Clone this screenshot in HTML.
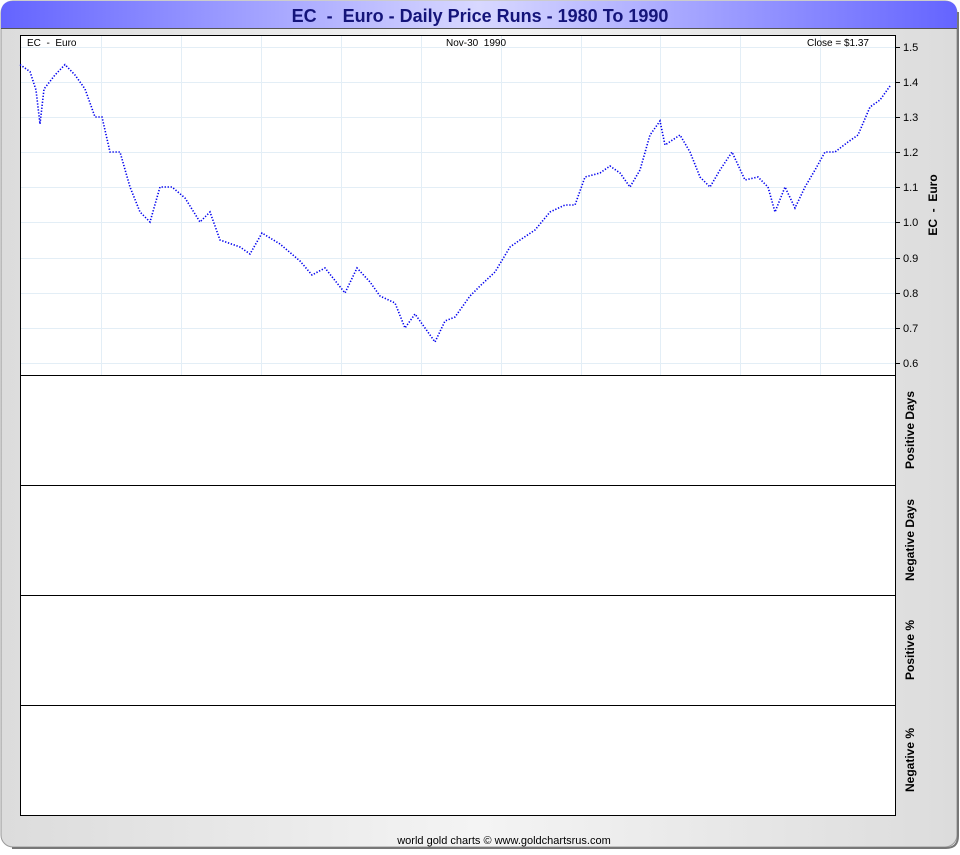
<!DOCTYPE html>
<html><head><meta charset="utf-8"><style>
html,body{margin:0;padding:0;background:#fff;}
body{width:960px;height:850px;overflow:hidden;font-family:"Liberation Sans",Arial,sans-serif;}
text{white-space:pre;}
</style></head><body>
<svg width="960" height="850" xmlns="http://www.w3.org/2000/svg" font-family="Liberation Sans, Arial, sans-serif" xml:space="preserve">
<defs>
<linearGradient id="tb" x1="0" x2="1" y1="0" y2="0">
<stop offset="0" stop-color="#6464ff"/><stop offset="0.5" stop-color="#d8d8ff"/><stop offset="1" stop-color="#6464ff"/></linearGradient>
<linearGradient id="bg" x1="0" x2="1" y1="0" y2="0">
<stop offset="0" stop-color="#dcdcdc"/><stop offset="0.5" stop-color="#f4f4f4"/><stop offset="1" stop-color="#dcdcdc"/></linearGradient>
</defs>
<rect x="1" y="1" width="956" height="846" rx="12" fill="url(#bg)" stroke="#999" stroke-width="1"/>
<path d="M958 12 V836 Q958 848 946 848 H12" fill="none" stroke="#777" stroke-width="2"/>
<path d="M1 28 V13 Q1 1 13 1 H945 Q957 1 957 13 V28 Z" fill="url(#tb)"/>
<line x1="1" y1="28.5" x2="957" y2="28.5" stroke="#555" stroke-width="1"/>
<text x="480" y="22" text-anchor="middle" font-size="18" font-weight="bold" fill="#14147a">EC  -  Euro - Daily Price Runs - 1980 To 1990</text>
<rect x="20.5" y="35.5" width="875" height="780" fill="#fff" stroke="#000"/>
<g stroke="#e3eef6" stroke-width="1">
<line x1="101.5" y1="36" x2="101.5" y2="375"/><line x1="181.5" y1="36" x2="181.5" y2="375"/><line x1="261.5" y1="36" x2="261.5" y2="375"/><line x1="341.5" y1="36" x2="341.5" y2="375"/><line x1="421.5" y1="36" x2="421.5" y2="375"/><line x1="501.5" y1="36" x2="501.5" y2="375"/><line x1="581.5" y1="36" x2="581.5" y2="375"/><line x1="660.5" y1="36" x2="660.5" y2="375"/><line x1="740.5" y1="36" x2="740.5" y2="375"/><line x1="820.5" y1="36" x2="820.5" y2="375"/>
<line x1="21" y1="47.5" x2="895" y2="47.5"/><line x1="21" y1="82.5" x2="895" y2="82.5"/><line x1="21" y1="117.5" x2="895" y2="117.5"/><line x1="21" y1="152.5" x2="895" y2="152.5"/><line x1="21" y1="187.5" x2="895" y2="187.5"/><line x1="21" y1="222.5" x2="895" y2="222.5"/><line x1="21" y1="258.5" x2="895" y2="258.5"/><line x1="21" y1="293.5" x2="895" y2="293.5"/><line x1="21" y1="328.5" x2="895" y2="328.5"/><line x1="21" y1="363.5" x2="895" y2="363.5"/>
</g>
<g stroke="#000"><line x1="20" y1="375.5" x2="896" y2="375.5"/><line x1="20" y1="485.5" x2="896" y2="485.5"/><line x1="20" y1="595.5" x2="896" y2="595.5"/><line x1="20" y1="705.5" x2="896" y2="705.5"/></g>
<polyline fill="none" stroke="#0000ee" stroke-width="1.6" stroke-dasharray="1.3 1.7" points="20,64.6 30,71.6 36,90 40,124 44,89 55,75 65,64.6 75,75 85,89 95,117 102,117 110,152 120,152 130,187 140,212 150,222 160,187 172,187 185,198 200,222 210,212 220,240 240,247 250,254 262,233 280,244 300,261 312,275 325,268 345,293 357,268 370,282 380,296 395,303 405,328 415,314 425,328 435,342 445,321 455,317 470,296 480,286 495,272 510,247 520,240 535,230 550,212 565,205 575,205 585,177 600,173 610,166 620,173 630,187 640,170 650,135 660,121 665,145 680,135 690,152 700,177 710,187 720,170 732,152 745,180 758,177 768,187 775,212 785,187 795,208 805,187 815,170 825,152 835,152 848,142 858,135 870,107 880,100 890,86"/>
<g font-size="10" fill="#000">
<text x="27" y="46">EC  -  Euro</text>
<text x="476" y="46" text-anchor="middle">Nov-30  1990</text>
<text x="869" y="46" text-anchor="end">Close = $1.37</text>
</g>
<g stroke="#000"><line x1="896" y1="47.5" x2="900" y2="47.5"/><line x1="896" y1="82.5" x2="900" y2="82.5"/><line x1="896" y1="117.5" x2="900" y2="117.5"/><line x1="896" y1="152.5" x2="900" y2="152.5"/><line x1="896" y1="187.5" x2="900" y2="187.5"/><line x1="896" y1="222.5" x2="900" y2="222.5"/><line x1="896" y1="258.5" x2="900" y2="258.5"/><line x1="896" y1="293.5" x2="900" y2="293.5"/><line x1="896" y1="328.5" x2="900" y2="328.5"/><line x1="896" y1="363.5" x2="900" y2="363.5"/></g>
<g font-size="11" fill="#000">
<text x="903" y="51">1.5</text><text x="903" y="86">1.4</text><text x="903" y="121">1.3</text><text x="903" y="156">1.2</text><text x="903" y="191">1.1</text><text x="903" y="226">1.0</text><text x="903" y="262">0.9</text><text x="903" y="297">0.8</text><text x="903" y="332">0.7</text><text x="903" y="367">0.6</text>
</g>
<g font-size="12" font-weight="bold" fill="#000">
<text transform="translate(937,205) rotate(-90)" text-anchor="middle">EC  -  Euro</text>
<text transform="translate(914,430) rotate(-90)" text-anchor="middle">Positive Days</text>
<text transform="translate(914,540) rotate(-90)" text-anchor="middle">Negative Days</text>
<text transform="translate(914,650) rotate(-90)" text-anchor="middle">Positive %</text>
<text transform="translate(914,760) rotate(-90)" text-anchor="middle">Negative %</text>
</g>
<text x="504" y="844" text-anchor="middle" font-size="11" fill="#000">world gold charts © www.goldchartsrus.com</text>
</svg>
</body></html>
